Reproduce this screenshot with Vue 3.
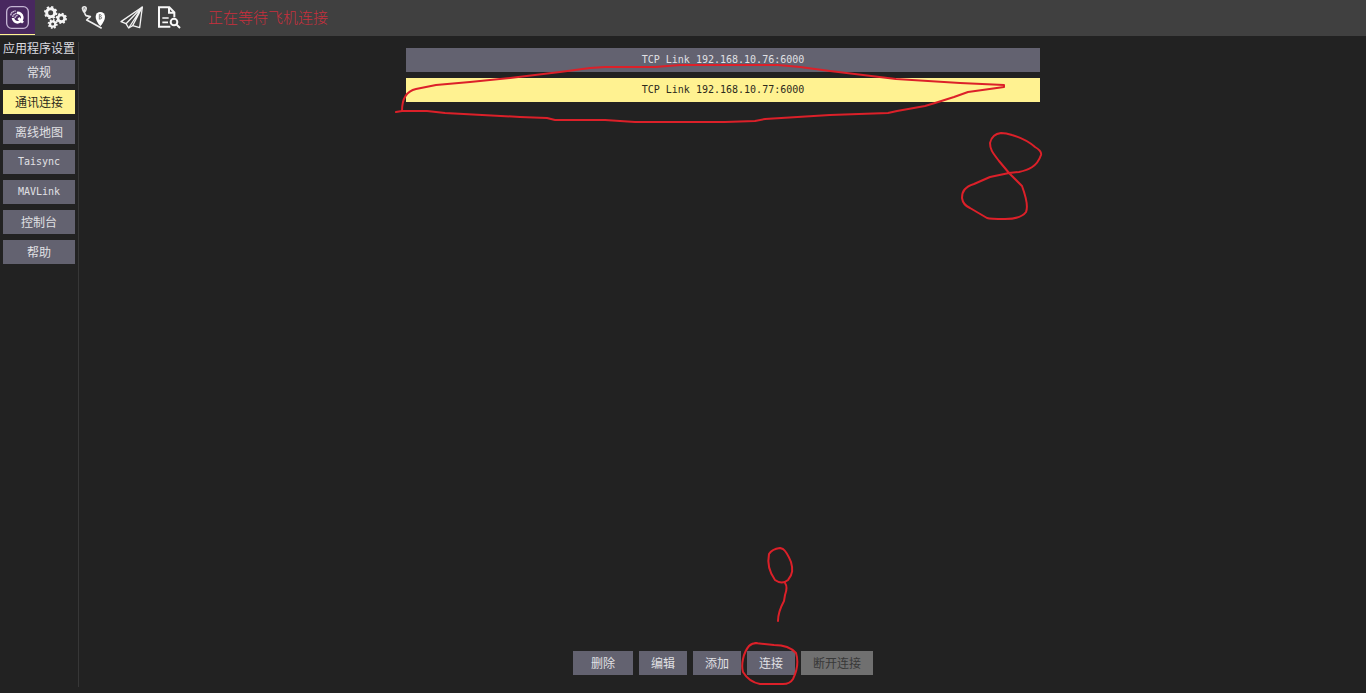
<script setup>
import { ref } from 'vue'

const sections = ['常规', '通讯连接', '离线地图', 'Taisync', 'MAVLink', '控制台', '帮助']
const section = ref('通讯连接')

const links = ['TCP Link 192.168.10.76:6000', 'TCP Link 192.168.10.77:6000']
const link = ref(links[1])

const isLatin = (text) => /^[\x20-\x7e]+$/.test(text)

const gears = [
  { x: 152, y: 38, ring: 12, width: 9, teeth: 17 },
  { x: 184, y: 55, ring: 10, width: 8, teeth: 14 },
  { x: 158, y: 72, ring: 8, width: 7, teeth: 12 }
]
</script>

<template>
  <div class="app">
    <header class="toolbar">
      <button class="tool home" type="button" aria-label="应用程序设置">
        <svg viewBox="0 0 105 102" aria-hidden="true">
          <rect x="20" y="20" width="65" height="65" rx="15" fill="none" stroke="#c3b4d2" stroke-width="4" />
          <path d="M51 39 A14 14 0 1 1 39 54" fill="none" stroke="#fff" stroke-width="8" />
          <path d="M55 54 L69 68" stroke="#fff" stroke-width="8" />
          <path d="M32 46 Q34 34 47 33 M38 51 Q40 42 50 40 M45 54 Q46 48 53 46" fill="none" stroke="#d3c6de" stroke-width="4" stroke-dasharray="5 1" />
        </svg>
      </button>
      <button class="tool" type="button" aria-label="载具设置">
        <svg viewBox="108 0 114 108" fill="none" stroke="#f4f4f4" aria-hidden="true">
          <g v-for="g in gears" :key="g.x">
            <circle :cx="g.x" :cy="g.y" :r="g.ring" :stroke-width="g.width" />
            <circle :cx="g.x" :cy="g.y" :r="g.teeth" stroke-width="6" pathLength="16" stroke-dasharray="1 1" />
          </g>
        </svg>
      </button>
      <button class="tool" type="button" aria-label="任务规划">
        <svg viewBox="-3 0 114 108" aria-hidden="true">
          <path d="M28 42 Q20 31 20 26 A8 8 0 0 1 36 26 Q36 31 28 42Z" fill="#e8e8e8" />
          <path d="M25 29 L28 22 L31 29" fill="none" stroke="#777" stroke-width="2" />
          <path d="M29 40 L33 47 L46 50 L35 60 L52 69 L80 85" fill="none" stroke="#eee" stroke-width="5" stroke-linejoin="round" />
          <path d="M76 79 Q62 62 62 50 A14 14 0 0 1 90 50 Q90 62 76 79Z" fill="#fff" />
          <path d="M73 43 V58 M73 44 H77 Q81 47 77 50 H74 M77 50 Q83 54 77 57 H73" fill="none" stroke="#777" stroke-width="3" />
        </svg>
      </button>
      <button class="tool" type="button" aria-label="飞行">
        <svg viewBox="111 0 114 108" fill="none" stroke="#f2f2f2" stroke-width="4" stroke-linejoin="round" aria-hidden="true">
          <path d="M202 21 L138 65 L153 71 L161 84 L173 77 L194 83Z" />
          <path d="M202 21 L153 71 M202 21 L161 84 M202 21 L173 77" />
        </svg>
      </button>
      <button class="tool" type="button" aria-label="分析">
        <svg viewBox="225 0 114 108" fill="none" stroke="#f8f8f8" stroke-width="6" aria-hidden="true">
          <path d="M286 80 H252 V22 H283 L298 37 V52 M282 22 V38 H298" />
          <path d="M262 54 H281 M262 67 H279" stroke-width="5" />
          <circle cx="297" cy="66" r="10" />
          <path d="M304 73 L315 84" />
        </svg>
      </button>
      <span class="status">正在等待飞机连接</span>
    </header>

    <div class="body">
      <nav class="sidebar">
        <h1 class="title">应用程序设置</h1>
        <button
          v-for="s in sections"
          :key="s"
          type="button"
          class="btn"
          :class="{ active: s === section, latin: isLatin(s) }"
          @click="section = s"
        >{{ s }}</button>
      </nav>

      <main class="content">
        <div class="links">
          <button
            v-for="l in links"
            :key="l"
            type="button"
            class="btn latin"
            :class="{ active: l === link }"
            @click="link = l"
          >{{ l }}</button>
        </div>
        <div class="actions">
          <button type="button" class="btn wide">删除</button>
          <button type="button" class="btn">编辑</button>
          <button type="button" class="btn">添加</button>
          <button type="button" class="btn">连接</button>
          <button type="button" class="btn" disabled>断开连接</button>
        </div>
      </main>
    </div>

    <svg class="marks" width="1366" height="693" viewBox="0 0 1366 693" aria-hidden="true">
      <path d="M402 111 C402 98 407 91 416 89 L436 85 L470 82 L510 78 L560 72 L590 68 L605 67 H655 L680 65 H778 L800 67 L830 71 L896 79 L960 83 L1004 85 L1004 87 L968 92 L954 97 L935 103 L925 106 L897 111 L888 113 L830 115 L765 119 L755 121 L725 122 H635 L605 120 L555 120 L547 118 L520 117 L445 113 L427 111 H402 L396 112" />
      <path d="M1009 173 L999 161 C992 152 990 149 990 143 Q992 134 1001 133 Q1006 133 1012 135 Q1026 139 1035 147 Q1042 151 1041 155 C1037 167 1028 170 1019 172 L1009 173 L990 177 L974 184 C965 187 962 191 962 198 Q963 205 970 208 L987 218 Q990 219 1005 219 Q1021 219 1026 212 Q1029 205 1022 186 Z" />
      <path d="M780 548 Q772 549 769 554 C767 564 770 573 775 580 Q782 585 788 580 C793 574 793 569 791 562 Q787 552 783 549 Z M785 583 Q788 587 785 595 L784 601 Q778 612 778 621" />
      <path d="M755 643 L774 645 Q789 645 796 653 C799 663 797 671 793 679 Q790 684 783 684 H760 Q749 682 743 672 C741 665 743 653 749 646 Q752 643 757 643" />
    </svg>
  </div>
</template>

<style>
body {
  margin: 0;
  background: #222;
}
</style>

<style scoped>
.app {
  position: relative;
  display: flex;
  flex-direction: column;
  min-height: 100vh;
  overflow: hidden;
  background: #222;
  color: #dcdce0;
  font-family: "Noto Sans CJK SC", sans-serif;
  font-size: 12px;
}

.toolbar {
  display: flex;
  align-items: center;
  height: 36px;
  background: #404040;
}

.tool {
  width: 38px;
  height: 36px;
  padding: 0;
  border: 0;
  background: none;
}

.tool svg {
  display: block;
  width: 100%;
  height: 100%;
}

.home {
  box-sizing: border-box;
  width: 35px;
  height: 35px;
  margin: 0 1px 1px 0;
  border-bottom: 1px solid #fff291;
  background: #48285f;
}

.status {
  margin-left: 20px;
  padding-bottom: 4px;
  color: #c82f3d;
  font-size: 15px;
  font-weight: 300;
}

.body {
  display: flex;
  flex: 1;
}

.sidebar {
  position: relative;
  display: flex;
  flex-direction: column;
  gap: 6px;
  box-sizing: border-box;
  width: 80px;
  padding: 0 5px 0 3px;
}

.sidebar::after {
  content: "";
  position: absolute;
  top: 6px;
  right: 1px;
  bottom: 6px;
  width: 1px;
  background: #373737;
}

.title {
  margin: 0 0 -6px;
  font-size: 12px;
  font-weight: 400;
  line-height: 24px;
  white-space: nowrap;
}

.btn {
  height: 24px;
  padding: 0 12px;
  border: 0;
  background: #636270;
  color: #e0e0e4;
  font-family: "Noto Sans CJK SC", sans-serif;
  font-size: 12px;
  line-height: 24px;
  white-space: nowrap;
}

.btn.active {
  background: #fff291;
  color: #2c2a1c;
}

.btn:disabled {
  background: #707070;
  color: #383838;
}

.btn.latin {
  font-family: "DejaVu Sans Mono", monospace;
  font-size: 10px;
}

.content {
  display: flex;
  flex: 1;
  flex-direction: column;
  align-items: center;
  justify-content: space-between;
  padding: 12px 0 18px;
}

.links {
  display: flex;
  flex-direction: column;
  gap: 6px;
  width: calc(50% - 9px);
}

.sidebar .btn {
  padding: 0;
}

.actions {
  display: flex;
  gap: 6px;
}

.wide {
  padding: 0 18px;
}

.marks {
  position: absolute;
  top: 0;
  left: 0;
  fill: none;
  stroke: #dc2029;
  stroke-width: 2;
  stroke-linejoin: round;
  stroke-linecap: round;
  pointer-events: none;
}
</style>
